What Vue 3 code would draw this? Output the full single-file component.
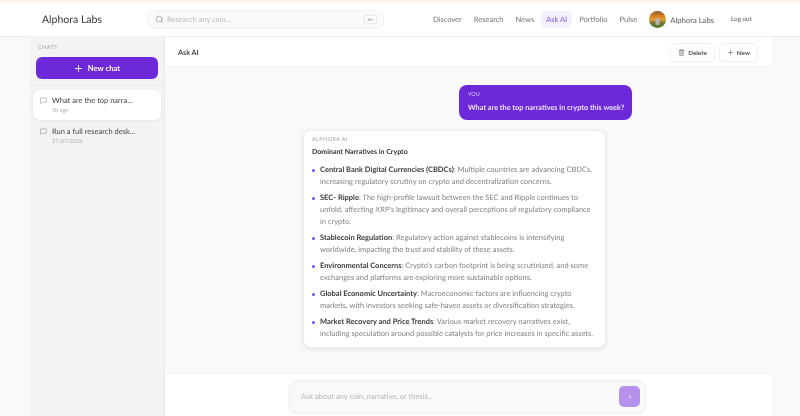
<script setup>
const navItems = ['Discover', 'Research', 'News', 'Ask AI', 'Portfolio', 'Pulse']

const chats = [
  { id: 1, title: 'What are the top narra...', time: '5h ago', active: true },
  { id: 2, title: 'Run a full research desk...', time: '27/07/2026', active: false }
]

const narratives = [
  {
    title: 'Central Bank Digital Currencies (CBDCs)',
    text: 'Multiple countries are advancing CBDCs, increasing regulatory scrutiny on crypto and decentralization concerns.'
  },
  {
    title: 'SEC- Ripple',
    text: "The high-profile lawsuit between the SEC and Ripple continues to unfold, affecting XRP's legitimacy and overall perceptions of regulatory compliance in crypto."
  },
  {
    title: 'Stablecoin Regulation',
    text: 'Regulatory action against stablecoins is intensifying worldwide, impacting the trust and stability of these assets.'
  },
  {
    title: 'Environmental Concerns',
    text: "Crypto's carbon footprint is being scrutinized, and some exchanges and platforms are exploring more sustainable options."
  },
  {
    title: 'Global Economic Uncertainty',
    text: 'Macroeconomic factors are influencing crypto markets, with investors seeking safe-haven assets or diversification strategies.'
  },
  {
    title: 'Market Recovery and Price Trends',
    text: 'Various market recovery narratives exist, including speculation around possible catalysts for price increases in specific assets.'
  }
]
</script>

<template>
  <div class="page">
    <div class="top-strip"></div>

    <header class="topbar">
      <div class="brand">Alphora Labs</div>
      <div class="search">
        <svg viewBox="0 0 24 24" width="9" height="9" fill="none" stroke="#9a9aa0" stroke-width="2" stroke-linecap="round">
          <circle cx="11" cy="11" r="8" />
          <path d="M21 21l-4.3-4.3" />
        </svg>
        <span class="search-text">Research any coin...</span>
        <span class="kbd">⌘K</span>
      </div>
      <nav class="nav">
        <a v-for="item in navItems" :key="item" class="nav-item" :class="{ active: item === 'Ask AI' }">{{ item }}</a>
      </nav>
      <div class="user">
        <svg class="avatar" viewBox="0 0 17 17" width="17" height="17">
          <defs>
            <linearGradient id="sky" x1="0" y1="0" x2="0" y2="1">
              <stop offset="0" stop-color="#8a5a2a" />
              <stop offset="0.3" stop-color="#d9801f" />
              <stop offset="0.5" stop-color="#e2a03a" />
              <stop offset="0.68" stop-color="#7d7a35" />
              <stop offset="1" stop-color="#4a7a2a" />
            </linearGradient>
          </defs>
          <circle cx="8.5" cy="8.5" r="8.5" fill="url(#sky)" />
          <rect x="6.5" y="7" width="4" height="7" rx="1.5" fill="#b9b4ad" />
        </svg>
        <span class="user-name">Alphora Labs</span>
      </div>
      <span class="logout">Log out</span>
    </header>

    <div class="body">
      <aside class="sidebar">
        <div class="side-head">
          <div class="side-label">CHATS</div>
          <button class="new-chat">
            <svg viewBox="0 0 24 24" width="9" height="9" fill="none" stroke="#fff" stroke-width="2.4" stroke-linecap="round">
              <path d="M12 4v16M4 12h16" />
            </svg>
            New chat
          </button>
        </div>
        <div class="chat-list">
          <div v-for="chat in chats" :key="chat.id" class="chat-row" :class="{ active: chat.active }">
            <svg class="chat-icon" viewBox="0 0 24 24" width="7" height="7" fill="none" stroke="#9a9aa0" stroke-width="2" stroke-linejoin="round">
              <path d="M2 3h20v15H8l-6 4z" />
            </svg>
            <div class="chat-info">
              <div class="chat-title">{{ chat.title }}</div>
              <div class="chat-time">{{ chat.time }}</div>
            </div>
          </div>
        </div>
      </aside>

      <main class="main">
        <div class="main-head">
          <span class="main-title">Ask AI</span>
          <div class="main-actions">
            <button class="action">
              <svg viewBox="0 0 24 24" width="7" height="7" fill="none" stroke="#66666c" stroke-width="2" stroke-linecap="round" stroke-linejoin="round">
                <path d="M4 5h16M9 5V2h6v3M6 5v17h12V5M10 10v7M14 10v7" />
              </svg>
              Delete
            </button>
            <button class="action">
              <svg viewBox="0 0 24 24" width="7" height="7" fill="none" stroke="#66666c" stroke-width="2" stroke-linecap="round">
                <path d="M12 4v16M4 12h16" />
              </svg>
              New
            </button>
          </div>
        </div>

        <div class="thread">
          <div class="bubble-you">
            <div class="you-label">YOU</div>
            <div class="you-text">What are the top narratives in crypto this week?</div>
          </div>

          <div class="bubble-ai">
            <div class="ai-label">ALPHORA AI</div>
            <div class="ai-title">Dominant Narratives in Crypto</div>
            <ul class="ai-list">
              <li v-for="n in narratives" :key="n.title">
                <strong>{{ n.title }}</strong>: {{ n.text }}
              </li>
            </ul>
          </div>
        </div>

        <div class="composer">
          <div class="composer-box">
            <span class="composer-text">Ask about any coin, narrative, or thesis...</span>
            <button class="send">
              <svg viewBox="0 0 24 24" width="4" height="4" fill="none" stroke="#fff" stroke-width="3" stroke-linecap="round" stroke-linejoin="round">
                <path d="M12 20V5M6 11l6-6 6 6" />
              </svg>
            </button>
          </div>
        </div>
      </main>
    </div>
  </div>
</template>

<style>
html,
body {
  margin: 0;
  background: #f8f8f9;
}
</style>

<style scoped>
.page {
  width: 800px;
  height: 416px;
  display: flex;
  flex-direction: column;
  overflow: hidden;
  font-family: Lato, "Noto Sans", sans-serif;
  text-rendering: geometricPrecision;
  will-change: transform;
  color: #2c2c33;
  background: #f9f9fa;
}

.top-strip {
  height: 3px;
  background: #fdf6ea;
}

.topbar {
  height: 34px;
  box-sizing: border-box;
  display: flex;
  align-items: center;
  background: #fff;
  border-bottom: 1px solid #efeff1;
  padding: 0 0 0 42px;
  flex-shrink: 0;
  white-space: nowrap;
}

.brand {
  width: 105px;
  font-size: 10.5px;
  color: #36363c;
}

.search {
  width: 237px;
  height: 19px;
  box-sizing: border-box;
  display: flex;
  align-items: center;
  gap: 3px;
  padding: 0 6px 0 7px;
  background: #fafafb;
  border: 1px solid #f0f0f2;
  border-radius: 7px;
}

.search-text {
  flex: 1;
  font-size: 7.5px;
  color: #b8b8be;
}

.kbd {
  width: 13px;
  height: 9px;
  box-sizing: border-box;
  display: flex;
  align-items: center;
  justify-content: center;
  font-size: 4px;
  color: #9a9aa0;
  background: #fff;
  border: 1px solid #e8e8ea;
  border-radius: 2px;
}

.nav {
  display: flex;
  align-items: center;
  gap: 2px;
  margin-left: 44px;
}

.nav-item {
  font-size: 7.5px;
  color: #74747c;
  height: 17px;
  line-height: 17px;
  padding: 0 5px;
  border-radius: 5px;
}

.nav-item.active {
  color: #7c5ae0;
  background: #f3effc;
}

.user {
  display: flex;
  align-items: center;
  gap: 4px;
  margin-left: 7px;
}

.user-name {
  font-size: 7.7px;
  color: #55555c;
}

.logout {
  font-size: 6.3px;
  color: #55555c;
  margin-left: 17px;
}

.body {
  flex: 1;
  display: flex;
  min-height: 0;
}

.sidebar {
  width: 135px;
  box-sizing: border-box;
  margin-left: 30px;
  background: #f3f3f4;
  border-right: 1px solid #e9e9eb;
  flex-shrink: 0;
}

.side-head {
  height: 49px;
  box-sizing: border-box;
  padding: 8px 6px 0;
  border-bottom: 1px solid #ececee;
}

.side-label {
  font-size: 5.5px;
  line-height: 7px;
  letter-spacing: 0.4px;
  color: #a8a8ae;
  margin: 0 2px 5px;
}

.new-chat {
  width: 122px;
  height: 22px;
  border: none;
  border-radius: 6px;
  background: #6d28d9;
  color: #fff;
  font-family: inherit;
  font-size: 7.7px;
  font-weight: 700;
  display: flex;
  align-items: center;
  justify-content: center;
  gap: 5px;
}

.chat-list {
  padding: 4px 3px;
  display: flex;
  flex-direction: column;
  gap: 1px;
}

.chat-row {
  height: 30px;
  box-sizing: border-box;
  display: flex;
  gap: 5px;
  padding: 6px 7px 0;
  border-radius: 7px;
}

.chat-row.active {
  background: #fff;
  box-shadow: 0 1px 3px rgba(0, 0, 0, 0.06);
}

.chat-icon {
  margin-top: 1px;
  flex-shrink: 0;
}

.chat-title {
  font-size: 7.5px;
  color: #3f3f46;
  line-height: 10px;
}

.chat-time {
  font-size: 5.5px;
  line-height: 7px;
  color: #adadb3;
  margin-top: 2px;
}

.main {
  width: 607px;
  flex-shrink: 0;
  display: flex;
  flex-direction: column;
  min-height: 0;
}

.main-head {
  height: 30px;
  box-sizing: border-box;
  background: #fff;
  border-bottom: 1px solid #f2f2f4;
  display: flex;
  align-items: center;
  justify-content: space-between;
  padding: 1px 14px 0 13px;
  flex-shrink: 0;
}

.main-title {
  font-size: 7.2px;
  font-weight: 700;
  color: #44444a;
}

.main-actions {
  display: flex;
  gap: 4px;
}

.action {
  height: 19px;
  box-sizing: border-box;
  display: flex;
  align-items: center;
  gap: 3px;
  padding: 0 7px;
  background: #fff;
  border: 1px solid #f2f2f4;
  border-radius: 5px;
  box-shadow: 0 1px 1px rgba(0, 0, 0, 0.02);
  font-family: inherit;
  font-size: 6.3px;
  font-weight: 700;
  color: #4c4c52;
}

.thread {
  flex: 1;
  min-height: 0;
  display: flex;
  flex-direction: column;
  align-items: flex-start;
  padding: 18px 0 0 138px;
}

.bubble-you {
  margin-left: 156px;
  width: 173px;
  height: 35px;
  box-sizing: border-box;
  background: #6d28d9;
  border-radius: 8px;
  padding: 7px 9px;
}

.you-label {
  font-size: 5.5px;
  line-height: 7px;
  color: #ddd0f7;
}

.you-text {
  font-size: 7.3px;
  line-height: 10px;
  font-weight: 700;
  color: #ece4fb;
  margin-top: 4px;
  white-space: nowrap;
}

.bubble-ai {
  width: 303px;
  height: 218px;
  box-sizing: border-box;
  margin-top: 10px;
  background: #fff;
  border: 1px solid #f0f0f2;
  border-radius: 8px;
  box-shadow: 0 1px 4px rgba(0, 0, 0, 0.1);
  padding: 6px 8px 0;
}

.ai-label {
  font-size: 5.5px;
  line-height: 7px;
  letter-spacing: 0.4px;
  color: #a4a4aa;
}

.ai-title {
  font-size: 7px;
  line-height: 10px;
  font-weight: 700;
  color: #33333a;
  margin-top: 3px;
}

.ai-list {
  list-style: none;
  margin: 7px 0 0;
  padding: 0;
}

.ai-list li {
  position: relative;
  font-size: 7.5px;
  line-height: 12px;
  color: #7f7f87;
  padding-left: 8px;
  margin-bottom: 4px;
}

.ai-list li:last-child {
  margin-bottom: 0;
}

.ai-list li::before {
  content: '';
  position: absolute;
  left: 0;
  top: 4.5px;
  width: 3px;
  height: 3px;
  border-radius: 50%;
  background: #7c4fe0;
}

.ai-list strong {
  color: #3a3a40;
  font-weight: 700;
}

.composer {
  height: 43px;
  box-sizing: border-box;
  flex-shrink: 0;
  border-top: 1px solid #f2f2f4;
  background: #fff;
  padding: 6px 0 0 124px;
}

.composer-box {
  width: 357px;
  height: 33px;
  box-sizing: border-box;
  display: flex;
  align-items: center;
  justify-content: space-between;
  padding: 0 5px 0 11px;
  background: #f9f9fa;
  border: 1px solid #f0f0f2;
  border-radius: 8px;
  box-shadow: 0 1px 3px rgba(0, 0, 0, 0.05);
}

.composer-text {
  font-size: 7.5px;
  color: #b4b4ba;
}

.send {
  width: 21px;
  height: 21px;
  border: none;
  border-radius: 5px;
  background: #b692ee;
  display: flex;
  align-items: center;
  justify-content: center;
  padding: 0;
}
</style>
